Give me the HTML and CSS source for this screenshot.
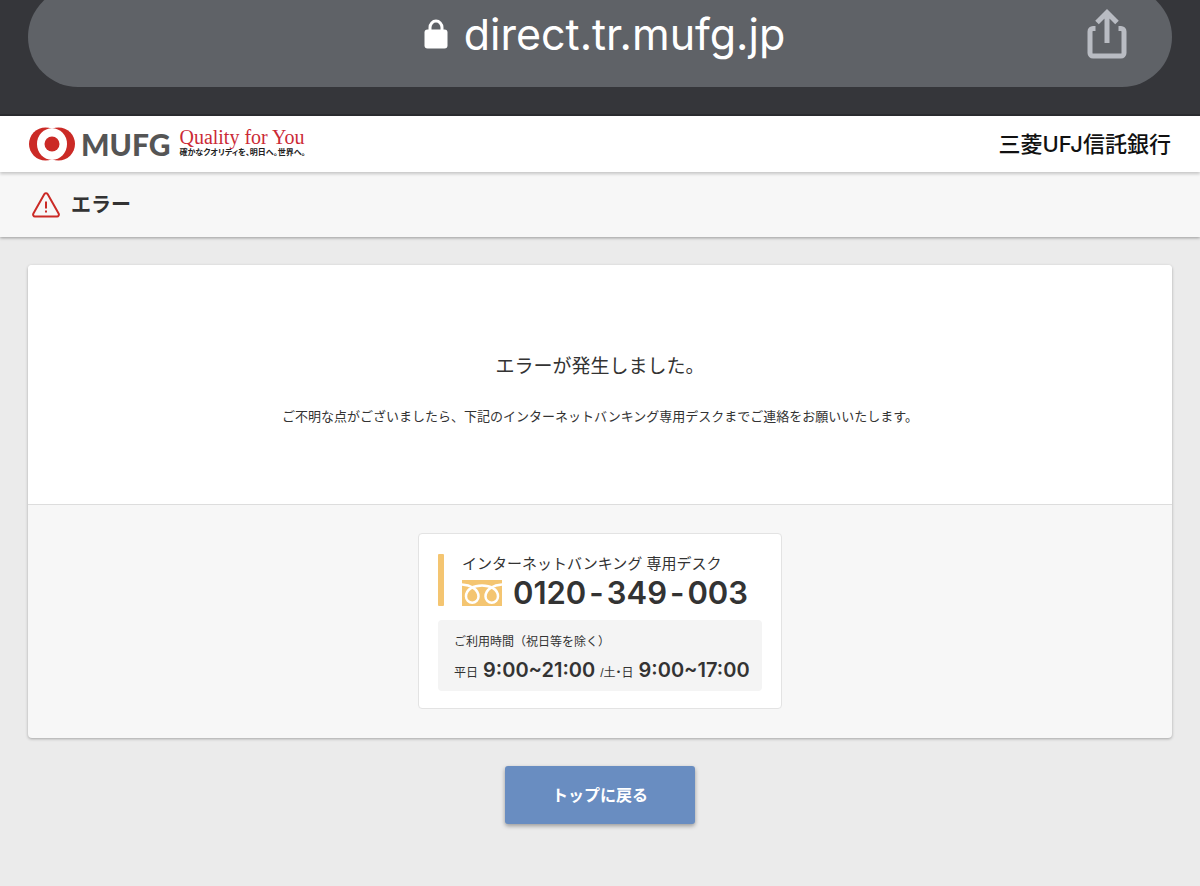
FILE: index.html
```html
<!DOCTYPE html>
<html lang="ja">

<head>
    <meta charset="UTF-8">
    <meta name="viewport" content="width=device-width, initial-scale=1.0">
    <title>エラー</title>
    <link rel="stylesheet" href="styles.css">
</head>

<body>
    <div class="browser-bar">
        <div class="address">
            <span></span>
            <div class="url">
                <svg class="lock" viewBox="0 0 24 30" aria-hidden="true">
                    <rect x="0.5" y="10.5" width="23" height="19" rx="3" />
                    <path d="M6 12V8.500a6 6.500 0 0 1 12 0V12" />
                </svg>
                <span>direct.tr.mufg.jp</span>
            </div>
            <button class="share" type="button" aria-label="共有">
                <svg viewBox="0 0 40 52" aria-hidden="true">
                    <path d="M8.500 20.500H6a3 3 0 0 0-3 3V45a3 3 0 0 0 3 3H34a3 3 0 0 0 3-3V23.500a3 3 0 0 0-3-3H31.500" />
                    <path d="M20 35V5M10 14.500L20 4.500L30 14.500" />
                </svg>
            </button>
        </div>
    </div>

    <header class="header">
        <a class="brand" href="#">
            <svg class="brand-mark" viewBox="0 0 46 34" aria-hidden="true">
                <circle class="red" cx="16.500" cy="17" r="16.500" />
                <circle class="red" cx="29.500" cy="17" r="16.500" />
                <ellipse class="white" cx="23" cy="17" rx="15" ry="15.800" />
                <circle class="red" cx="23" cy="17" r="7.500" />
            </svg>
            <span class="brand-name">MUFG</span>
            <span class="slogan">
                <span class="slogan-en">Quality for You</span>
                <span class="slogan-ja">確かなクオリティを、明日へ。世界へ。</span>
            </span>
        </a>
        <div class="bank">三菱<span>UFJ</span>信託銀行</div>
    </header>

    <div class="title-bar">
        <svg class="warning" viewBox="0 0 28 26" aria-hidden="true">
            <path d="M12.400 2a2 2 0 0 1 3.200 0L26.600 21.500a2 2 0 0 1-1.600 3H3a2 2 0 0 1-1.600-3z" />
            <path d="M14 9.500V16.500M14 18.500V20.500" />
        </svg>
        <h1>エラー</h1>
    </div>

    <main class="main">
        <section class="panel">
            <div class="message">
                <h2>エラーが発生しました。</h2>
                <p>ご不明な点がございましたら、下記のインターネットバンキング専用デスクまでご連絡をお願いいたします。</p>
            </div>
            <div class="contact">
                <div class="card">
                    <div class="desk">
                        <div class="desk-name">インターネットバンキング 専用デスク</div>
                        <div class="phone">
                            <svg class="free-dial" viewBox="0 0 40 26" aria-hidden="true">
                                <rect width="40" height="26" />
                                <path d="M0 4.500C8 5 16.500 9 16.500 16.500a6.200 6.200 0 0 1-12.500 0C4 9 12 5.500 20 5.500S36 9 36 16.500a6.200 6.200 0 0 1-12.500 0C23.500 9 32 5 40 4.500" />
                            </svg>
                            <span class="number"><span>0120</span><span>-</span><span>349</span><span>-</span><span>003</span></span>
                        </div>
                    </div>
                    <div class="hours">
                        <div class="hours-title">ご利用時間（祝日等を除く）</div>
                        <div class="hours-row">
                            <span>平日</span>
                            <strong>9:00~21:00</strong>
                            <span class="weekend">/土・日</span>
                            <strong>9:00~17:00</strong>
                        </div>
                    </div>
                </div>
            </div>
        </section>
        <button class="button" type="button">トップに戻る</button>
    </main>
</body>

</html>
```
FILE: styles.css
```css
* {
    box-sizing: border-box;
}

body {
    margin: 0;
    background-color: #ebebeb;
    color: #333;
    font-family: "Liberation Sans", "Noto Sans CJK JP", sans-serif;
}

h1,
h2,
p {
    margin: 0;
}

.browser-bar {
    overflow: hidden;
    padding: 0 28px 27px;
    background-color: #35363a;
    border-bottom: 2px solid #2a2b2f;
}

.address {
    display: grid;
    grid-template-columns: 1fr auto 1fr;
    align-items: center;
    height: 100px;
    margin-top: -13px;
    padding: 0 45px 7px 54px;
    border-radius: 50px;
    background-color: #5f6267;
}

.url {
    display: flex;
    align-items: center;
    gap: 16px;
    color: #fff;
    font-family: Inter, sans-serif;
    font-size: 43px;
    line-height: 48px;
}

.lock {
    width: 24px;
    height: 30px;
    fill: #fff;
}

.lock path {
    fill: none;
    stroke: #fff;
    stroke-width: 3;
}

.share {
    justify-self: end;
    padding: 0;
    border: 0;
    background: none;
}

.share svg {
    display: block;
    width: 40px;
    height: 52px;
    fill: none;
    stroke: #b9bcc3;
    stroke-width: 5;
}

.header {
    position: relative;
    display: flex;
    justify-content: space-between;
    align-items: center;
    height: 56px;
    padding: 0 29px;
    background-color: #fff;
    box-shadow: 0 2px 3px rgba(0, 0, 0, 0.2);
}

.brand {
    display: flex;
    align-items: center;
    color: #555;
    text-decoration: none;
}

.brand-mark {
    width: 46px;
    height: 34px;
    margin-right: 6px;
}

.red {
    fill: #cb2a26;
}

.white {
    fill: #fff;
}

.brand-name {
    margin-right: 9px;
    font-family: Lato, sans-serif;
    font-size: 30px;
    font-weight: 900;
    line-height: 32px;
}

.slogan {
    display: flex;
    flex-direction: column;
    padding-bottom: 2px;
}

.slogan-en {
    color: #cb2a36;
    font-family: "Liberation Serif", serif;
    font-size: 20px;
    line-height: 20px;
}

.slogan-ja {
    color: #222;
    font-family: "Liberation Serif", "Noto Sans CJK JP", serif;
    font-size: 8px;
    font-weight: 700;
    line-height: 12px;
    font-feature-settings: "palt";
}

.bank {
    color: #111;
    font-size: 22px;
    font-weight: 500;
    line-height: 28px;
}

.bank span {
    font-family: Inter, sans-serif;
}

.title-bar {
    display: flex;
    align-items: center;
    gap: 11px;
    height: 65px;
    padding: 0 32px;
    background-color: #f7f7f7;
    box-shadow: 0 1px 3px rgba(0, 0, 0, 0.35);
}

.title-bar h1 {
    font-size: 20px;
    line-height: 28px;
}

.warning {
    width: 28px;
    height: 26px;
    fill: none;
    stroke: #cb2a26;
    stroke-width: 2;
}

.main {
    display: flex;
    flex-direction: column;
    align-items: center;
    gap: 28px;
    padding: 28px;
}

.panel {
    width: 100%;
    border-radius: 4px;
    background-color: #f7f7f7;
    box-shadow: 0 1px 3px rgba(0, 0, 0, 0.3);
}

.message {
    padding: 88px 24px 75px;
    border-bottom: 1px solid #ddd;
    border-radius: 4px 4px 0 0;
    background-color: #fff;
    text-align: center;
}

.message h2 {
    margin-bottom: 24px;
    font-size: 19px;
    font-weight: 400;
    line-height: 28px;
}

.message p {
    font-size: 13px;
    line-height: 24px;
}

.contact {
    display: flex;
    justify-content: center;
    padding: 28px 28px 29px;
}

.card {
    width: 364px;
    padding: 20px 19px 17px;
    border: 1px solid #e3e3e3;
    border-radius: 4px;
    background-color: #fff;
}

.desk {
    position: relative;
    padding-left: 24px;
}

.desk::before {
    content: "";
    position: absolute;
    top: 0;
    bottom: 0;
    left: 0;
    width: 6px;
    border-radius: 1px;
    background-color: #f4c571;
}

.desk-name {
    font-size: 15px;
    line-height: 20px;
}

.phone {
    display: flex;
    align-items: center;
    gap: 11px;
    height: 26px;
    margin-top: 6px;
}

.free-dial {
    width: 40px;
    height: 26px;
    fill: #f4c571;
}

.free-dial path {
    fill: none;
    stroke: #fff;
    stroke-width: 2.5;
}

.number {
    display: flex;
    gap: 3px;
    font-family: Inter, sans-serif;
    font-size: 31px;
    font-weight: 600;
    line-height: 32px;
}

.hours {
    margin-top: 14px;
    padding: 12px 10px 6px 16px;
    border-radius: 4px;
    background-color: #f4f4f4;
}

.hours-title {
    font-size: 12px;
    line-height: 20px;
}

.hours-row {
    display: flex;
    align-items: baseline;
    gap: 5px;
    margin-top: 6px;
    font-size: 12px;
    line-height: 24px;
    white-space: nowrap;
}

.hours-row strong {
    font-family: Inter, sans-serif;
    font-size: 20px;
    font-weight: 600;
}

.weekend {
    font-feature-settings: "palt";
}

.button {
    padding: 16px 47px 14px;
    border: 0;
    border-radius: 3px;
    background-color: #698dc1;
    box-shadow: 0 2px 4px rgba(0, 0, 0, 0.35);
    color: #fff;
    font-family: inherit;
    font-size: 16px;
    font-weight: 700;
    line-height: 28px;
}
```
